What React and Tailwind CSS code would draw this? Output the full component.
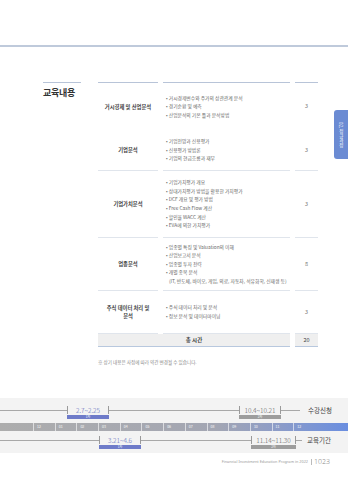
const rows = [
  {
    label: ["거시경제 및 산업분석"],
    items: ["거시경제변수와 주가의 상관관계 분석", "경기순환 및 예측", "산업분석의 기본 틀과 분석방법"],
    hours: "3",
    h: "h-[48px]",
    top: true,
    bottom: false,
  },
  {
    label: ["기업분석"],
    items: ["기업전망과 신용평가", "신용평가 방법론", "기업의 현금흐름과 재무"],
    hours: "3",
    h: "h-[41px]",
  },
  {
    label: ["기업가치분석"],
    items: [
      "기업가치평가 개요",
      "상대가치평가 방법을 활용한 가치평가",
      "DCF 개요 및 평가 방법",
      "Free Cash Flow 계산",
      "할인율 WACC 계산",
      "EVA에 의한 가치평가",
    ],
    hours: "3",
    h: "h-[67px]",
  },
  {
    label: ["업종분석"],
    items: ["업종별 특징 및 Valuation의 이해", "산업보고서 분석", "업종별 투자 전략", "개별 종목 분석"],
    sub: "(IT, 반도체, 바이오, 게임, 의료, 자동차, 석유화학, 신재생 등)",
    hours: "8",
    h: "h-[53px]",
  },
  {
    label: ["주식 데이터 처리 및", "분석"],
    items: ["주식 데이터 처리 및 분석", "정보 분석 및 데이터마이닝"],
    hours: "3",
    h: "h-[43px]",
  },
];

const months = ["12", "01", "02", "03", "04", "05", "06", "07", "08", "09", "10", "11", "12"];

function Bracket({ w, text, tone, round }) {
  return (
    <div className={`flex flex-col ${w}`}>
      <div
        className={`h-[8px] border-x border-[#9a9a9a] flex items-center justify-center text-[6.5px] leading-none font-light ${
          tone === "blue" ? "text-[#5565b8]" : "text-[#555]"
        }`}
      >
        {text}
      </div>
      <div
        className={`mt-[1px] h-[4px] flex items-center justify-center text-[3px] leading-none text-white ${
          tone === "blue" ? "bg-[#6e7bc9]" : "bg-[#9d9d9d]"
        }`}
      >
        {round}
      </div>
    </div>
  );
}

function Line({ w }) {
  return <div className={`${w} mt-[4px] h-px bg-[#a8a8a8]`} />;
}

export default function App() {
  return (
    <div className="relative w-[348px] h-[480px] overflow-hidden bg-white font-['Noto_Sans_CJK_KR','Noto_Sans',sans-serif]">
      <div className="h-[45px]" />
      <div className="h-[1.5px] bg-[#bfcadb]" />

      <div className="flex mt-[35.5px]">
        {/* 제목 */}
        <div className="ml-[43px] w-[38px] border-t border-[#b8c4d8] pt-[4px]">
          <h2 className="text-[9px] leading-[11px] font-bold text-[#333] tracking-[-0.3px]">교육내용</h2>
        </div>

        {/* 표 */}
        <div className="ml-[17px] w-[220px]">
          <div className="grid grid-cols-[60px_127px_23px] gap-x-[5px]">
            {rows.map((r, i) => {
              const line = r.top
                ? "border-t border-[#b8c4d8]"
                : r.bottom === false
                ? ""
                : "border-b border-[#e0e5ec]";
              const cell = `${r.h} ${line} ${i === 0 ? "" : ""}`;
              return [
                <div
                  key={`l${i}`}
                  className={`${cell} flex flex-col items-center justify-center text-[5.3px] leading-[8px] font-bold text-[#444] text-center`}
                >
                  {r.label.map((t) => (
                    <span key={t}>{t}</span>
                  ))}
                </div>,
                <div
                  key={`c${i}`}
                  className={`${cell} flex flex-col justify-center pl-[3px] text-[4.8px] leading-[8.6px] text-[#666]`}
                >
                  {r.items.map((t) => (
                    <span key={t} className="whitespace-nowrap">
                      • {t}
                    </span>
                  ))}
                  {r.sub && <span className="pl-[3px] whitespace-nowrap">{r.sub}</span>}
                </div>,
                <div
                  key={`h${i}`}
                  className={`${cell} flex items-center justify-center text-[5.5px] text-[#777]`}
                >
                  {r.hours}
                </div>,
              ];
            })}
            <div className="col-span-2 h-[13px] bg-[#efefef] border-b border-[#b8c8de] flex items-center justify-center text-[5.5px] font-bold text-[#444]">
              총 시간
            </div>
            <div className="h-[13px] bg-[#efefef] border-b border-[#b8c8de] flex items-center justify-center text-[5.5px] text-[#444]">
              20
            </div>
          </div>
          <p className="mt-[11px] text-[4.6px] leading-[8px] text-[#888]">
            ※ 상기 내용은 사정에 따라 약간 변경될 수 있습니다.
          </p>
        </div>
      </div>

      {/* 일정 */}
      <div className="mt-[32px] h-[55px] bg-[#f3f3f3] pt-[8px]">
        <div className="flex items-start">
          <Line w="w-[67px]" />
          <Bracket w="w-[42px]" text="2.7~2.25" tone="blue" round="1차" />
          <Line w="w-[130px]" />
          <Bracket w="w-[42px]" text="10.4~10.21" tone="gray" round="2차" />
          <Line w="w-[19px]" />
          <span className="ml-[8px] text-[6.5px] leading-[8px] text-[#444]">수강신청</span>
        </div>

        <div className="mt-[4px] h-[8px] flex pl-[33px] bg-[linear-gradient(90deg,#adadad_0%,#a3a6b3_62%,#8c9cc8_80%,#6a8ee0_100%)]">
          {months.map((m, i) => (
            <div
              key={i}
              className="w-[21.7px] border-l border-white/60 pl-[3px] flex items-center text-[3.5px] leading-none text-white/90"
            >
              {m}
            </div>
          ))}
        </div>

        <div className="mt-[5px] flex items-start">
          <Line w="w-[99px]" />
          <Bracket w="w-[42px]" text="3.21~4.6" tone="blue" round="1차" />
          <Line w="w-[110px]" />
          <Bracket w="w-[45px]" text="11.14~11.30" tone="gray" round="2차" />
          <Line w="w-[6px]" />
          <span className="ml-[5px] text-[6.5px] leading-[8px] text-[#444]">교육기간</span>
        </div>
      </div>

      {/* 하단 */}
      <div className="mt-[4px] flex items-center justify-end pr-[18px] h-[10px]">
        <span className="text-[3.8px] text-[#999] font-['Noto_Sans',sans-serif]">
          Financial Investment Education Program in 2022
        </span>
        <span className="ml-[3px] mr-[2px] h-[6px] w-px bg-[#bbb]" />
        <span className="text-[7px] font-light text-[#888] font-['Noto_Sans',sans-serif]">1023</span>
      </div>

      {/* 측면 탭 */}
      <div className="absolute right-0 top-[110px] w-[14px] h-[49px] rounded-l-[3px] bg-[#6b8bd3] flex items-center justify-center">
        <span className="[writing-mode:vertical-rl] text-[4.5px] text-white leading-none whitespace-nowrap">
          02. 정규과정
        </span>
      </div>
    </div>
  );
}
